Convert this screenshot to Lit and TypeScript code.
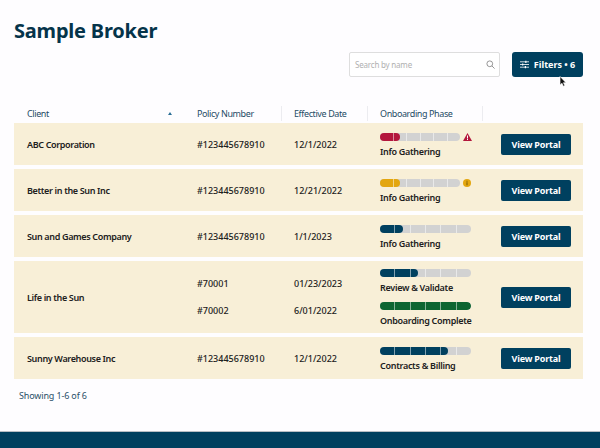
import { LitElement, html, css, nothing } from "lit";
import { customElement } from "lit/decorators.js";

type Phase = { label: string; fill: number; tone: string; narrow?: boolean; alert?: "warn" | "info" };
type Row = { client: string; policies: string[]; dates: string[]; phases: Phase[] };

const rows: Row[] = [
  { client: "ABC Corporation", policies: ["#123445678910"], dates: ["12/1/2022"], phases: [{ label: "Info Gathering", fill: 1.5, tone: "red", narrow: true, alert: "warn" }] },
  { client: "Better in the Sun Inc", policies: ["#123445678910"], dates: ["12/21/2022"], phases: [{ label: "Info Gathering", fill: 1.5, tone: "amber", narrow: true, alert: "info" }] },
  { client: "Sun and Games Company", policies: ["#123445678910"], dates: ["1/1/2023"], phases: [{ label: "Info Gathering", fill: 1.5, tone: "navy" }] },
  { client: "Life in the Sun", policies: ["#70001", "#70002"], dates: ["01/23/2023", "6/01/2022"], phases: [{ label: "Review & Validate", fill: 2.5, tone: "navy" }, { label: "Onboarding Complete", fill: 6, tone: "green" }] },
  { client: "Sunny Warehouse Inc", policies: ["#123445678910"], dates: ["12/1/2022"], phases: [{ label: "Contracts & Billing", fill: 4.5, tone: "navy" }] },
];

@customElement("app-root")
export class AppRoot extends LitElement {
  static styles = css`
    :host { display: block; width: 600px; height: 448px; position: relative; overflow: hidden; background: #fefdff; color: #1c1c1c; font-family: "Noto Sans", sans-serif; }
    .page { height: 448px; display: flex; flex-direction: column; box-sizing: border-box; padding-top: 16px; }
    h1 { margin: 0 0 0 14px; font-size: 20px; line-height: 29px; font-weight: 700; color: #05344a; letter-spacing: -0.2px; }
    .tools { display: flex; justify-content: flex-end; gap: 12px; margin: 7px 17px 0 0; }
    .search { width: 151px; height: 25px; box-sizing: border-box; border: 1px solid #dedede; border-radius: 2px; background: #fff; display: flex; align-items: center; justify-content: space-between; padding: 0 4px 0 5px; font-size: 8px; letter-spacing: -0.2px; color: #b0b0b0; }
    .filters { width: 71px; height: 25px; box-sizing: border-box; background: #00405f; color: #fff; border-radius: 3px; display: flex; align-items: center; justify-content: center; gap: 5px; font-size: 9px; font-weight: 700; }
    .head, .row { display: grid; grid-template-columns: 183px 97px 86px 121px 70px; margin: 0 17px 0 14px; }
    .head { margin-top: 27px; height: 19px; font-size: 9px; letter-spacing: -0.4px; color: #1f4c66; align-items: center; }
    .hcell { height: 15px; display: flex; align-items: center; justify-content: space-between; box-sizing: border-box; border-right: 1px solid #ececf0; margin-right: 12px; white-space: nowrap; }
    .hcell.client { border-right: none; padding-left: 13px; margin-right: 0; padding-right: 25px; }
    .hcell.phase { margin-right: 18px; }
    .sort { width: 0; height: 0; border-left: 2.5px solid transparent; border-right: 2.5px solid transparent; border-bottom: 3px solid #2b6f96; }
    .rows { display: flex; flex-direction: column; gap: 4px; }
    .row { width: 569px; padding-right: 12px; box-sizing: border-box; min-height: 42px; background: #f8efd7; align-items: center; font-size: 9px; font-weight: 600; color: #202020; }
    .client-name { padding: 1px 0 0 13px; letter-spacing: -0.35px; }
    .stack { display: flex; flex-direction: column; gap: 13px; padding-top: 1px; font-weight: 500; }
    .stack div { line-height: 14px; }
    .phases { display: flex; flex-direction: column; gap: 8px; padding: 8px 0 6px; }
    .phase-block { display: flex; flex-direction: column; gap: 4px; }
    .bar-line { display: flex; align-items: center; gap: 3px; height: 8px; }
    .bar { width: 91px; height: 8px; border-radius: 4px; overflow: hidden; background: #d2d2d2; position: relative; display: flex; }
    .bar.narrow { width: 80px; }
    .fill.red { background: #b3163c; }
    .fill.amber { background: #e3a60f; }
    .fill.navy { background: #00405f; }
    .fill.green { background: #0d6531; }
    .fill { height: 100%; border-radius: 0 4px 4px 0; }
    .ticks { position: absolute; inset: 0; display: flex; }
    .ticks i { flex: 1; border-right: 1px solid rgba(255, 255, 255, 0.5); }
    .ticks i:last-child { border-right: none; }
    .label { font-size: 9px; font-weight: 600; line-height: 13px; white-space: nowrap; letter-spacing: -0.3px; }
    .btn { width: 70px; height: 21px; background: #00405f; color: #fff; border-radius: 2px; display: flex; align-items: center; justify-content: center; font-size: 9px; font-weight: 700; letter-spacing: -0.2px; }
    .showing { margin: 6px 0 0 19px; font-size: 9px; line-height: 22px; color: #2a5068; letter-spacing: -0.15px; }
    footer { margin-top: auto; height: 17px; background: #00405f; border-top: 1px solid #b8bec4; box-sizing: border-box; }
    .cursor { position: absolute; left: 559px; top: 76px; }
    svg { display: block; flex: none; }
  `;

  private bar(p: Phase) {
    const width = p.narrow ? 80 : 91;
    const w = (p.fill / 6) * width;
    return html`<div class="bar-line">
      <div class="bar ${p.narrow ? "narrow" : ""}">
        <div class="fill ${p.tone}" style="width:${w}px"></div>
        <div class="ticks"><i></i><i></i><i></i><i></i><i></i><i></i></div>
      </div>
      ${p.alert === "warn"
        ? html`<svg width="9" height="8" viewBox="0 0 9 8"><path d="M4.5 0 9 8H0Z" fill="#b3163c"/><path d="M4 2.5h1v3H4zM4 6h1v1H4z" fill="#fff"/></svg>`
        : p.alert === "info"
          ? html`<svg width="8" height="8" viewBox="0 0 8 8"><circle cx="4" cy="4" r="4" fill="#e3a60f"/><path d="M3.5 3.2h1v3h-1zM3.5 1.7h1v1h-1z" fill="#7a5a05"/></svg>`
          : nothing}
    </div>`;
  }

  render() {
    return html`<div class="page">
      <h1>Sample Broker</h1>
      <div class="tools">
        <div class="search"><span>Search by name</span>
          <svg width="9" height="9" viewBox="0 0 10 10" fill="none" stroke="#8a8a8a" stroke-width="1"><circle cx="4.2" cy="4.2" r="3.2"/><path d="M6.5 6.5 9.5 9.5"/></svg>
        </div>
        <div class="filters">
          <svg width="9" height="9" viewBox="0 0 10 10" fill="none" stroke="#fff" stroke-width="0.9"><path d="M0 2h10M0 5h10M0 8h10"/><path d="M6.5.8v2.4M3 3.8v2.4M6 6.8v2.4" stroke-width="1.3"/></svg>
          <span>Filters • 6</span>
        </div>
      </div>
      <div class="head">
        <div class="hcell client"><span>Client</span><span class="sort"></span></div>
        <div class="hcell policy">Policy Number</div>
        <div class="hcell date">Effective Date</div>
        <div class="hcell phase">Onboarding Phase</div>
      </div>
      <div class="rows">
        ${rows.map((r) => html`<div class="row">
          <div class="client-name">${r.client}</div>
          <div class="stack">${r.policies.map((x) => html`<div>${x}</div>`)}</div>
          <div class="stack">${r.dates.map((x) => html`<div>${x}</div>`)}</div>
          <div class="phases">${r.phases.map((p) => html`<div class="phase-block">${this.bar(p)}<div class="label">${p.label}</div></div>`)}</div>
          <div class="btn">View Portal</div>
        </div>`)}
      </div>
      <div class="showing">Showing 1-6 of 6</div>
      <footer></footer>
    </div>
    <svg class="cursor" width="8" height="11" viewBox="0 0 9 13"><path d="M1 .5v10l2.3-2 1.6 3.6 1.7-.8-1.6-3.4H8Z" fill="#111" stroke="#fff" stroke-width="0.7"/></svg>`;
  }
}
